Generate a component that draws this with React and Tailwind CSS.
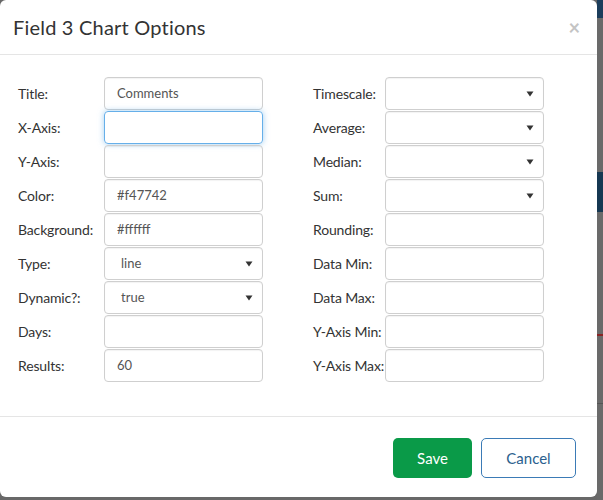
const leftRows = [
  { label: "Title:", value: "Comments" },
  { label: "X-Axis:", value: "", focus: true },
  { label: "Y-Axis:", value: "" },
  { label: "Color:", value: "#f47742" },
  { label: "Background:", value: "#ffffff" },
  { label: "Type:", value: "line", select: true },
  { label: "Dynamic?:", value: "true", select: true },
  { label: "Days:", value: "" },
  { label: "Results:", value: "60" },
];

const rightRows = [
  { label: "Timescale:", select: true },
  { label: "Average:", select: true },
  { label: "Median:", select: true },
  { label: "Sum:", select: true },
  { label: "Rounding:" },
  { label: "Data Min:" },
  { label: "Data Max:" },
  { label: "Y-Axis Min:" },
  { label: "Y-Axis Max:" },
];

function Caret() {
  return (
    <svg width="8" height="6" viewBox="0 0 8 6" className="shrink-0">
      <path d="M0.5 0.5 L7.5 0.5 L4 5.5 Z" fill="#333" />
    </svg>
  );
}

function Field({ row, labelWidth }) {
  return (
    <div className="flex items-center h-[33px]">
      <div className={`${labelWidth} shrink-0 whitespace-nowrap text-[14px] tracking-[-0.15px] text-[#333]`}>{row.label}</div>
      <div
        className={`w-[159px] h-[33px] rounded-[4px] border flex items-center justify-between text-[13px] text-[#555] ${
          row.focus
            ? "border-[#66afe9] shadow-[0_0_6px_rgba(102,175,233,0.6)]"
            : "border-[#cfcfcf] shadow-[inset_0_1px_1px_rgba(0,0,0,0.05)]"
        } ${row.select ? "pl-[16px] pr-[9px]" : "px-[12px]"}`}
      >
        <span>{row.value}</span>
        {row.select && <Caret />}
      </div>
    </div>
  );
}

export default function App() {
  return (
    <div className="flex w-[603px] h-[500px] bg-[#686868] overflow-hidden" style={{ fontFamily: "Lato, 'Open Sans', sans-serif" }}>
      <div className="w-[597px] h-[497px] bg-white rounded-[6px] flex flex-col shrink-0">
        <div className="h-[55px] border-b border-[#e5e5e5] flex items-center justify-between pl-[13px] pr-[17px]">
          <h4 className="text-[20px] text-[#333] tracking-[0.2px]">Field 3 Chart Options</h4>
          <span className="text-[20px] leading-none text-[#c4c4c4] font-bold">×</span>
        </div>
        <div className="h-[362px] border-b border-[#e5e5e5] pt-[22px] pl-[18px] flex gap-[50px]">
          <div className="flex flex-col gap-[1px]">
            {leftRows.map((r) => (
              <Field key={r.label} row={r} labelWidth="w-[86px]" />
            ))}
          </div>
          <div className="flex flex-col gap-[1px]">
            {rightRows.map((r) => (
              <Field key={r.label} row={r} labelWidth="w-[72px]" />
            ))}
          </div>
        </div>
        <div className="flex-1 flex items-start justify-end gap-[9px] pt-[21px] pr-[21px]">
          <button className="w-[79px] h-[40px] rounded-[5px] bg-[#0a9a48] text-white text-[15px]">Save</button>
          <button className="w-[95px] h-[40px] rounded-[5px] border border-[#3b7bb6] text-[#2b5f8e] text-[15px]">Cancel</button>
        </div>
      </div>
      <div className="flex-1 flex flex-col">
        <div className="h-[18px] bg-[#1b3d5b]" />
        <div className="h-[154px] bg-[#6a6a6a]" />
        <div className="h-[40px] bg-[#163852]" />
        <div className="h-[122px] bg-[#6a6a6a]" />
        <div className="h-[2px] bg-[#8a2424]" />
        <div className="h-[67px] bg-[#6a6a6a]" />
        <div className="h-[1px] bg-[#555]" />
        <div className="flex-1 bg-[#6a6a6a]" />
      </div>
    </div>
  );
}
